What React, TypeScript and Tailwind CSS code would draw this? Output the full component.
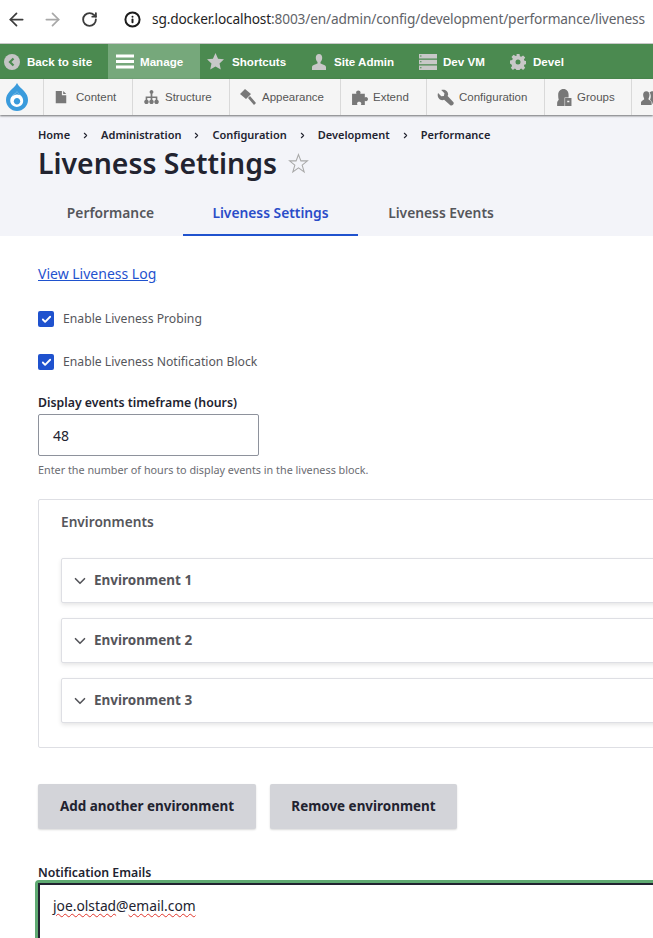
import React from "react";
import { ArrowLeft, ArrowRight, RotateCw, Info, ChevronDown, ChevronRight, Check } from "lucide-react";

const Svg = ({ children, className = "" }: { children: React.ReactNode; className?: string }) => (
  <svg viewBox="0 0 16 16" className={className} fill="currentColor">{children}</svg>
);

const GreenItem = ({ icon, label, active = false, cls = "" }: { icon: React.ReactNode; label: string; active?: boolean; cls?: string }) => (
  <div className={`flex h-full shrink-0 items-center text-[11.6px] font-bold text-white ${active ? "bg-[#76a87b]" : ""} ${cls}`}>
    {icon}
    <span>{label}</span>
  </div>
);

const GrayItem = ({ icon, label, w }: { icon: React.ReactNode; label: string; w: string }) => (
  <div className={`flex h-full shrink-0 items-center border-r border-[#d9d9d9] pl-[10px] ${w}`}>
    <span className="flex w-[22px] shrink-0 text-[#787878]">{icon}</span>
    <span className="pt-[1px] text-[11.5px] text-[#565656]">{label}</span>
  </div>
);

const Crumb = ({ label, last = false }: { label: string; last?: boolean }) => (
  <>
    <span>{label}</span>
    {!last && <ChevronRight className="mx-[11px] h-[9px] w-[9px] shrink-0 text-[#222330]" strokeWidth={3} />}
  </>
);

const Env = ({ n }: { n: number }) => (
  <div className="flex h-[45px] w-[640px] shrink-0 items-center rounded-[2px] border border-[#dedfe4] bg-white pl-[9px] shadow-[0_2px_4px_rgba(0,0,0,0.1)]">
    <ChevronDown className="h-[18px] w-[18px] text-[#55565b]" strokeWidth={2.2} />
    <span className="ml-[5px] text-[13.5px] font-bold text-[#55565b]">Environment {n}</span>
  </div>
);

const Box = () => (
  <span className="flex h-[16px] w-[16px] shrink-0 items-center justify-center rounded-[2px] bg-[#1f52ce]">
    <Check className="h-[11px] w-[11px] text-white" strokeWidth={4} />
  </span>
);

const btn = "flex h-[45px] items-center justify-center rounded-[2px] bg-[#d3d4d9] text-[13.45px] font-bold text-[#222330] shadow-[0_1px_2px_rgba(0,0,0,0.15)]";
const squiggle = "underline decoration-[#e0352b] decoration-wavy decoration-1 underline-offset-2";

export default function App() {
  return (
    <div className="flex h-[938px] w-[653px] flex-col overflow-hidden bg-white font-['Noto_Sans','Open_Sans',sans-serif]">
      {/* browser bar */}
      <div className="flex h-[44px] shrink-0 items-center border-b border-[#c8c8c8] bg-white pb-[4px] pl-[6px]">
        <ArrowLeft className="h-[21px] w-[21px] shrink-0 text-[#3c3c3c]" strokeWidth={2} />
        <ArrowRight className="ml-[15px] h-[21px] w-[21px] shrink-0 text-[#a8a8a8]" strokeWidth={2} />
        <RotateCw className="ml-[18px] h-[17px] w-[17px] shrink-0 text-[#3c3c3c]" strokeWidth={2.6} />
        <Info className="ml-[26px] h-[17px] w-[17px] shrink-0 text-[#1c1c1c]" strokeWidth={2.8} />
        <div className="ml-[11px] whitespace-nowrap text-[13.7px] tracking-[-0.15px] text-[#5f6368]">
          <span className="text-[#1f1f1f]">sg.docker.localhost</span>:8003/en/admin/config/development/performance/liveness
        </div>
      </div>

      {/* green toolbar */}
      <div className="flex h-[35px] shrink-0 items-center bg-[#4b8a50] font-['Liberation_Sans',sans-serif]">
        <GreenItem cls="w-[108px] pl-[4px]" label="Back to site" icon={
          <span className="mr-[7px] flex h-[16px] w-[16px] items-center justify-center rounded-full bg-[#c5c5c5]">
            <svg viewBox="0 0 10 10" className="h-[10px] w-[10px]"><path d="M6.500 1.500 3 5l3.500 3.500" fill="none" stroke="#4b8a50" strokeWidth="2.2" /></svg>
          </span>} />
        <GreenItem active cls="w-[92px] pl-[8px]" label="Manage" icon={
          <svg viewBox="0 0 18 16" className="mr-[6px] h-[17px] w-[18px]"><path d="M0 1h18v3H0zM0 6.500h18v3H0zM0 12h18v3H0z" fill="#fff" /></svg>} />
        <GreenItem cls="w-[104px] pl-[7px]" label="Shortcuts" icon={
          <Svg className="mr-[8px] h-[17px] w-[17px] text-[#c8c8c8]"><path d="M8 0l2.400 5.300 5.600.6-4.200 3.900 1.200 5.700L8 12.600 3 15.500l1.200-5.700L0 5.900l5.600-.6z" /></Svg>} />
        <GreenItem cls="w-[115px] pl-[7px]" label="Site Admin" icon={
          <Svg className="mr-[7px] h-[16px] w-[16px] text-[#c8c8c8]"><path d="M8 0c2 0 3.200 1.600 3.200 3.800 0 1.800-.8 3.400-1.700 4.300v1.400c2 .8 5.500 1.800 5.500 3.500V16H1v-3c0-1.700 3.500-2.700 5.500-3.500V8.100C5.600 7.200 4.800 5.600 4.800 3.800 4.800 1.600 6 0 8 0z" /></Svg>} />
        <GreenItem cls="w-[91px]" label="Dev VM" icon={
          <svg viewBox="0 0 18 16" className="mr-[6px] h-[16px] w-[18px]"><path fillRule="evenodd" d="M0 0h18v4.500H0zM1 1.500v1h1.500v-1zM0 5.700h18v4.500H0zM1 7.300v1h1.500v-1zM0 11.500h18V16H0zM1 13.200v1h1.500v-1z" fill="#c8c8c8" /></svg>} />
        <GreenItem label="Devel" icon={
          <Svg className="mr-[7px] h-[16px] w-[16px] text-[#c8c8c8]"><path fillRule="evenodd" d="M6.500 0h3l.4 2.200 1.300.6 1.900-1.300 2.100 2.100-1.300 1.900.6 1.300 2.200.4v3l-2.200.4-.6 1.300 1.300 1.900-2.100 2.100-1.900-1.300-1.300.6-.4 2.200h-3l-.4-2.200-1.300-.6-1.900 1.300-2.100-2.100 1.300-1.900-.6-1.300L0 9.500v-3l2.200-.4.6-1.300-1.300-1.900 2.100-2.100 1.900 1.300 1.300-.6zM8 5.500a2.500 2.500 0 1 0 0 5 2.500 2.500 0 0 0 0-5z" /></Svg>} />
      </div>

      {/* white toolbar */}
      <div className="relative z-10 flex h-[36px] shrink-0 items-center bg-[#f5f5f5] font-['Liberation_Sans',sans-serif] shadow-[0_1px_2px_rgba(0,0,0,0.55)]">
        <div className="flex h-full w-[44px] shrink-0 items-center border-r border-[#d9d9d9] pl-[6px]">
          <svg viewBox="0 0 22 28" className="h-[28px] w-[22px]">
            <path d="M11 0c1.500 3.500 4.500 5.300 7 8 2.700 3 4 5.500 4 9 0 6-5 11-11 11S0 23 0 17c0-3.500 1.300-6 4-9 2.500-2.700 5.500-4.500 7-8z" fill="#3a9bdc" />
            <path d="M11 8.500c1.500 2 4 3.500 5.200 5.700 1.800 3.300 1 6.500-1.200 8.300-2.400 1.900-6 1.900-8.300 0-2.500-2-3.200-5.400-1.500-8.300C6.500 12 9.500 10.500 11 8.500z" fill="#fff" />
            <path d="M7.800 18.300c0-1.900 1.400-3.200 3.200-3.200s3.200 1.300 3.200 3.200-1.400 3.200-3.200 3.200-3.200-1.300-3.200-3.200z" fill="#3a9bdc" />
            <path d="M11 8.500C13 11 15 12 16 14c-1-1.800-3-2.500-5-2.500s-4 1-5 2.500c1-2 3-3 5-5.500z" fill="#3a9bdc" />
          </svg>
        </div>
        <GrayItem w="w-[89px]" label="Content" icon={<Svg className="h-[16px] w-[14px]"><path d="M2 1h7v5h5v9H2zM10.500 1 14 4.500h-3.500z" /></Svg>} />
        <GrayItem w="w-[97px]" label="Structure" icon={<Svg className="h-[17px] w-[17px]"><path d="M8 1a1.800 1.800 0 0 1 .8 3.400V7H13.500v3.100a2.100 2.100 0 1 1-1.500 0V8.500H8.800v1.600a2.100 2.100 0 1 1-1.600 0V8.500H4v1.600a2.100 2.100 0 1 1-1.500 0V7h4.700V4.400A1.800 1.800 0 0 1 8 1z" /></Svg>} />
        <GrayItem w="w-[111px]" label="Appearance" icon={<Svg className="h-[16px] w-[16px]"><path d="M0 5l5-5 6 5-5 5zM8 9l2-2 6 7-2 2z" /></Svg>} />
        <GrayItem w="w-[86px]" label="Extend" icon={<Svg className="h-[17px] w-[17px]"><path d="M4.800 3.300C4.800.7 9 .7 9 3.300c0 .6-.3.9-.3 1.200h4.300v3.400c.4-.2.700-.4 1.100-.4 2.500 0 2.500 4 0 4-.4 0-.7-.2-1.100-.4V15H9.200c.3-.4.5-.7.500-1.200 0-2.300-4-2.300-4 0 0 .5.200.8.500 1.200H1V4.500h4.100c0-.3-.3-.6-.3-1.200z" /></Svg>} />
        <GrayItem w="w-[118px]" label="Configuration" icon={<Svg className="h-[17px] w-[17px]"><path d="M1 3.800 4 6.800 6.500 6.500 7 4 4 1c3-1.200 6.500.8 6.500 4.200L10 6.600 15.500 12.500c1 1.800-1.200 3.800-3 2.800L6.700 10 5 10.500C1.800 10.500-.2 7 1 3.800z" /></Svg>} />
        <GrayItem w="w-[87px]" label="Groups" icon={<Svg className="h-[17px] w-[17px]"><path fillRule="evenodd" d="M8 0c3 0 4.800 2.300 4.800 5.500V8H9v8H2v-2.500c0-2 .8-2.700 1.500-3.500C3 8.500 3 6.500 3 5.500 3 2.300 5 0 8 0zM9.500 8.500h6V16h-6zM11.500 11v1.500h2V11z" /></Svg>} />
        <div className="flex h-full items-center pl-[9px] text-[#787878]">
          <Svg className="h-[17px] w-[17px]"><path d="M5 2c2 0 3 1.500 3 3.500S7 9 7 9.500c0 1 3 1.500 3 3.500v2H0v-2c0-2 3-2.500 3-3.500S2 7.500 2 5.500 3 2 5 2zM11 2c2 0 3 1.500 3 3.500s-1 3.500-1 4c0 1 3 1.500 3 3.500v1h-5c0-2-2-3-2.500-4 1-2 1-5-.5-7 .8-.6 2-1 3-1z" /></Svg>
        </div>
      </div>

      {/* page header */}
      <div className="h-[121px] shrink-0 bg-[#f3f4f9]">
        <div className="flex items-center pl-[38px] pt-[13px] text-[11px] font-semibold leading-[14px] text-[#222330]">
          <Crumb label="Home" /><Crumb label="Administration" /><Crumb label="Configuration" /><Crumb label="Development" /><Crumb label="Performance" last />
        </div>
        <div className="flex items-center pl-[38px] pt-[1px]">
          <h1 className="text-[28.4px] font-semibold leading-[40px] text-[#222330]">Liveness Settings</h1>
          <svg viewBox="0 0 20 20" className="ml-[11px] h-[21px] w-[21px]"><path d="M10 1.500l2.300 6h6.200l-5 4 1.900 6.500L10 14.200 4.600 18l1.900-6.500-5-4h6.200z" fill="none" stroke="#a8a8a8" strokeWidth="1" /></svg>
        </div>
        <div className="mt-[9px] flex h-[44px] pl-[38px] text-[13.8px] font-semibold text-[#55565b]">
          <div className="flex w-[145px] items-center justify-center pb-[1px]">Performance</div>
          <div className="flex w-[175px] items-center justify-center border-b-2 border-[#1f52ce] text-[#2a4cc8]">Liveness Settings</div>
          <div className="flex w-[166px] items-center justify-center pb-[1px]">Liveness Events</div>
        </div>
      </div>

      {/* content */}
      <div className="flex flex-col items-start pl-[38px]">
        <a className="mt-[28px] text-[14px] leading-[20px] text-[#1f52ce] underline">View Liveness Log</a>
        <label className="mt-[25px] flex h-[20px] items-center gap-[9px] text-[12.2px] text-[#55565b]"><Box />Enable Liveness Probing</label>
        <label className="mt-[23px] flex h-[20px] items-center gap-[9px] text-[12.2px] text-[#55565b]"><Box />Enable Liveness Notification Block</label>
        <div className="mt-[22px] text-[12.3px] font-semibold leading-[18px] text-[#222330]">Display events timeframe (hours)</div>
        <div className="mt-[2px] flex h-[42px] w-[221px] items-center rounded-[2px] border border-[#8e929c] pl-[14px] text-[14px] text-[#222330]">48</div>
        <div className="mt-[6px] text-[10.8px] leading-[16px] text-[#6b6c72]">Enter the number of hours to display events in the liveness block.</div>

        <div className="mt-[21px] flex h-[249px] w-[640px] shrink-0 flex-col rounded-[2px] border border-[#dedfe4] pl-[22px]">
          <div className="mt-[13px] text-[13.7px] font-semibold leading-[18px] text-[#55565b]">Environments</div>
          <div className="mt-[27px] flex flex-col gap-[15px]">
            <Env n={1} /><Env n={2} /><Env n={3} />
          </div>
        </div>

        <div className="mt-[36px] flex gap-[14px]">
          <button className={`${btn} w-[218px]`}>Add another environment</button>
          <button className={`${btn} w-[187px]`}>Remove environment</button>
        </div>

        <div className="mt-[36px] text-[12.3px] font-semibold leading-[15px] text-[#222330]">Notification Emails</div>
        <div className="ml-[-3px] h-[100px] w-[640px] shrink-0 rounded-[4px] border-[3px] border-[#5faa72]">
          <div className="h-full w-full border-2 border-[#222330] pl-[13px] pt-[11px] text-[13.8px] leading-[20px] text-[#222330]">
            <span className={squiggle}>joe.olstad</span>@<span className={squiggle}>email.com</span>
          </div>
        </div>
      </div>
    </div>
  );
}
